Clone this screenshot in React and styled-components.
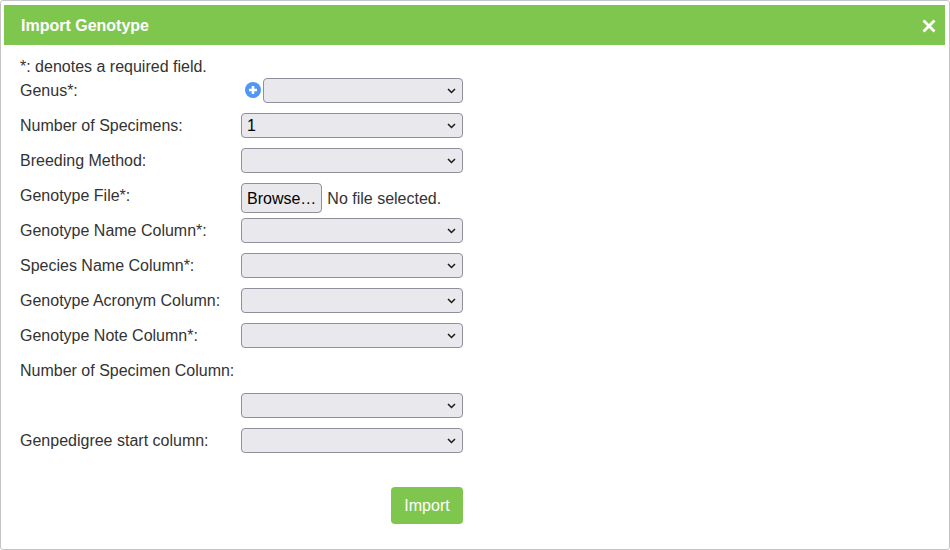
import styled, { createGlobalStyle } from "styled-components";

const GlobalStyle = createGlobalStyle`
  html, body {
    margin: 0;
    padding: 0;
    background: #fff;
  }
  body {
    font-family: "Liberation Sans", Arial, sans-serif;
    font-size: 16px;
    color: #333;
  }
`;

const Dialog = styled.div`
  box-sizing: border-box;
  width: 950px;
  height: 550px;
  padding: 4px 4px 4px 3px;
  border: 1px solid #c5c5c5;
  border-radius: 3px;
  background: #fff;
`;

const Header = styled.div`
  display: flex;
  align-items: center;
  justify-content: space-between;
  height: 40px;
  padding: 1px 8px 0 17px;
  box-sizing: border-box;
  background: #7fc64e;
  color: #fff;
`;

const Title = styled.span`
  font-size: 16px;
  font-weight: bold;
`;

const CloseButton = styled.button`
  display: flex;
  padding: 0;
  border: 0;
  background: none;
  color: #fff;
`;

const Body = styled.div`
  padding: 13px 16px 0;
`;

const Note = styled.div`
  height: 18px;
  line-height: 18px;
  margin-bottom: 2px;
`;

const Row = styled.div`
  display: grid;
  grid-template-columns: 221px 222px;
  align-items: start;
  height: 35px;
`;

const Label = styled.label`
  line-height: 25px;
  white-space: nowrap;
`;

const Field = styled.div`
  display: flex;
  align-items: flex-start;
`;

const SelectWrap = styled.div`
  position: relative;
  flex: 1;
  min-width: 0;
  height: 25px;
`;

const Select = styled.select`
  display: block;
  appearance: none;
  box-sizing: border-box;
  width: 100%;
  height: 25px;
  padding: 0 20px 0 5px;
  border: 1px solid #8f8f9d;
  border-radius: 4px;
  background: #e9e9ed;
  color: #000;
  font-family: "Liberation Sans", Arial, sans-serif;
  font-size: 16px;
`;

const Chevron = styled.svg`
  position: absolute;
  top: 10px;
  right: 7px;
  width: 9px;
  height: 6px;
  pointer-events: none;
`;

const AddIcon = styled.svg`
  flex: none;
  width: 16px;
  height: 16px;
  margin: 4px 2px 0 4px;
`;

const FileButton = styled.button`
  box-sizing: border-box;
  height: 30px;
  padding: 1px 5px 0;
  border: 1px solid #8f8f9d;
  border-radius: 4px;
  background: #e9e9ed;
  color: #000;
  font-family: "Liberation Sans", Arial, sans-serif;
  font-size: 16px;
`;

const FileName = styled.span`
  margin-left: 5px;
  line-height: 31px;
  white-space: nowrap;
`;

const Actions = styled.div`
  display: flex;
  justify-content: flex-end;
  width: 443px;
  margin-top: 24px;
`;

const ImportButton = styled.button`
  width: 72px;
  height: 37px;
  padding: 0;
  border: 0;
  border-radius: 4px;
  background: #7fc64e;
  color: #fff;
  font-family: "Liberation Sans", Arial, sans-serif;
  font-size: 16px;
`;

const Dropdown = ({ value, options }) => (
  <SelectWrap>
    <Select defaultValue={value}>
      {options && options.map((o) => <option key={o}>{o}</option>)}
    </Select>
    <Chevron viewBox="0 0 9 6">
      <path d="M1 1l3.5 3.5L8 1" fill="none" stroke="#1a1a1a" strokeWidth="1.5" />
    </Chevron>
  </SelectWrap>
);

const selectRows = [
  { label: "Number of Specimens:", value: "1", options: ["1", "2", "3"] },
  { label: "Breeding Method:" },
];

const columnRows = [
  "Genotype Name Column*:",
  "Species Name Column*:",
  "Genotype Acronym Column:",
  "Genotype Note Column*:",
];

const App = () => {
  return (
    <Dialog>
      <GlobalStyle />
      <Header>
        <Title>Import Genotype</Title>
        <CloseButton aria-label="Close">
          <svg width="16" height="16" viewBox="0 0 16 16">
            <path d="M2.5 2.5l11 11M13.5 2.5l-11 11" stroke="#fff" strokeWidth="2.8" />
          </svg>
        </CloseButton>
      </Header>
      <Body>
        <Note>*: denotes a required field.</Note>
        <Row>
          <Label>Genus*:</Label>
          <Field>
            <AddIcon viewBox="0 0 16 16">
              <circle cx="8" cy="8" r="8" fill="#4f97f3" />
              <path d="M8 4v8M4 8h8" stroke="#fff" strokeWidth="2.6" />
            </AddIcon>
            <Dropdown />
          </Field>
        </Row>
        {selectRows.map((row) => (
          <Row key={row.label}>
            <Label>{row.label}</Label>
            <Field>
              <Dropdown value={row.value} options={row.options} />
            </Field>
          </Row>
        ))}
        <Row>
          <Label>Genotype File*:</Label>
          <Field>
            <FileButton>Browse…</FileButton>
            <FileName>No file selected.</FileName>
          </Field>
        </Row>
        {columnRows.map((label) => (
          <Row key={label}>
            <Label>{label}</Label>
            <Field>
              <Dropdown />
            </Field>
          </Row>
        ))}
        <Row>
          <Label>Number of Specimen Column:</Label>
        </Row>
        <Row>
          <span />
          <Field>
            <Dropdown />
          </Field>
        </Row>
        <Row>
          <Label>Genpedigree start column:</Label>
          <Field>
            <Dropdown />
          </Field>
        </Row>
        <Actions>
          <ImportButton>Import</ImportButton>
        </Actions>
      </Body>
    </Dialog>
  );
};

export default App;
